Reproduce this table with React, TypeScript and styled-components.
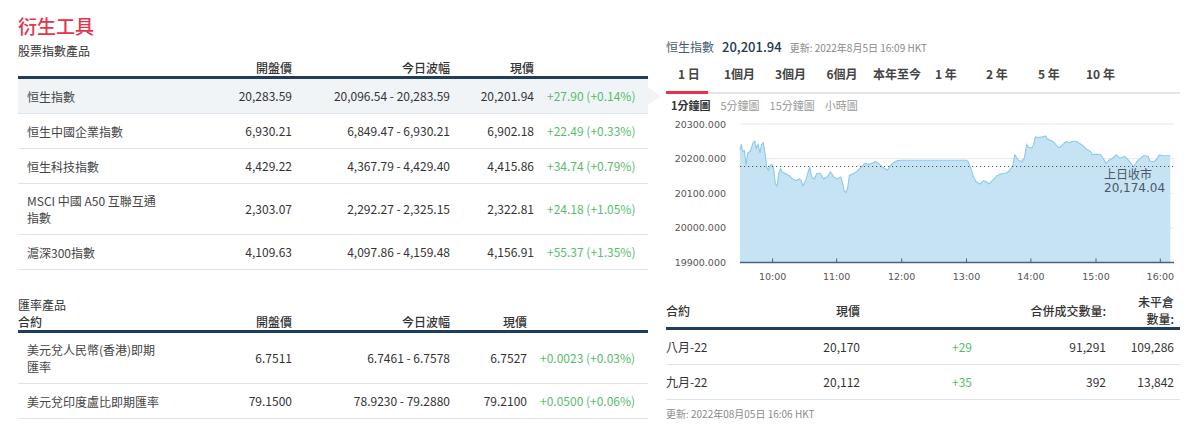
import styled, { createGlobalStyle } from 'styled-components'

const GlobalStyle = createGlobalStyle`
  body {
    margin: 0;
    background: #fff;
    font-family: 'Noto Sans CJK TC', 'Noto Sans', sans-serif;
    color: #333;
  }
`

const colors = {
  red: '#e5334d',
  navy: '#1f3d5c',
  line: '#dde4ec',
  green: '#56bd6c',
  highlight: '#f1f4f7',
  text: '#333',
  muted: '#8a8a8a',
}

const Page = styled.div`
  display: flex;
  gap: 18px;
  width: 1200px;
  height: 424px;
  box-sizing: border-box;
  padding: 14px 0 0 18px;
  overflow: hidden;
`
const Left = styled.section`
  width: 630px;
  flex: none;
`
const Right = styled.section`
  width: 514px;
  flex: none;
  padding-top: 24px;
`
const Title = styled.h1`
  margin: 0;
  font-size: 19px;
  line-height: 24px;
  font-weight: 500;
  color: ${colors.red};
`
const SubTitle = styled.h2<{ $gap: number }>`
  margin: ${(p) => p.$gap}px 0 0;
  font-size: 12px;
  line-height: 16px;
  font-weight: 400;
  color: ${colors.text};
`
const Table = styled.table<{ $w: number }>`
  width: ${(p) => p.$w}px;
  border-collapse: collapse;
  table-layout: fixed;
  font-size: 12px;
`
const Col = styled.col<{ $w: number }>`
  width: ${(p) => p.$w}px;
`
const Th = styled.th<{ $align?: 'left' | 'right'; $padR?: number; $lh?: number }>`
  text-align: ${(p) => p.$align || 'right'};
  font-weight: 500;
  line-height: ${(p) => p.$lh || 16}px;
  padding: 1px ${(p) => p.$padR || 0}px 0 0;
  border-bottom: 3px solid ${colors.navy};
  color: ${colors.text};
  vertical-align: middle;
  white-space: nowrap;
`
const Tr = styled.tr<{ $active?: boolean }>`
  background: ${(p) => (p.$active ? colors.highlight : 'transparent')};
`
const Td = styled.td<{ $align?: 'left' | 'right'; $padL?: number; $padR?: number; $up?: boolean }>`
  text-align: ${(p) => p.$align || 'right'};
  padding: 8px ${(p) => p.$padR || 0}px 8px ${(p) => p.$padL || 0}px;
  line-height: 18px;
  border-bottom: 1px solid ${colors.line};
  color: ${(p) => (p.$up ? colors.green : colors.text)};
  white-space: nowrap;
`
const NameTd = styled.td`
  padding: 8px 30px 8px 9px;
  line-height: 17px;
  border-bottom: 1px solid ${colors.line};
  color: #444;
  text-align: left;
`
const ChangeTd = styled(Td)<{ $arrow?: boolean }>`
  position: relative;
  &::after {
    content: '';
    display: ${(p) => (p.$arrow ? 'block' : 'none')};
    position: absolute;
    right: -13px;
    top: 50%;
    transform: translateY(-50%);
    border-left: 13px solid ${colors.highlight};
    border-top: 9px solid transparent;
    border-bottom: 9px solid transparent;
  }
`

/* right panel */
const InfoLine = styled.div`
  display: flex;
  align-items: baseline;
  gap: 8px;
  line-height: 18px;
`
const InfoName = styled.span`
  font-size: 12px;
  color: #4a5a6b;
`
const InfoPrice = styled.span`
  font-size: 13px;
  font-weight: 500;
  color: #23384d;
`
const Stamp = styled.span`
  font-size: 10px;
  color: ${colors.muted};
`
const Tabs = styled.div`
  display: flex;
  padding-top: 9px;
  border-bottom: 2px solid #e4e4e4;
`
const Tab = styled.div<{ $w?: number; $active?: boolean }>`
  position: relative;
  box-sizing: border-box;
  flex: ${(p) => (p.$w ? `0 0 ${p.$w}px` : '1')};
  padding: 0 0 10px 12px;
  font-size: 12px;
  line-height: 16px;
  font-weight: 700;
  color: #444;
  white-space: nowrap;
  &::after {
    content: '';
    display: ${(p) => (p.$active ? 'block' : 'none')};
    position: absolute;
    left: 0;
    bottom: -2px;
    width: 42px;
    height: 3px;
    background: ${colors.red};
  }
`
const SubTabs = styled.div`
  display: flex;
  gap: 10px;
  padding-left: 5px;
  margin-top: 4px;
  font-size: 11px;
  line-height: 14px;
`
const SubTab = styled.span<{ $active?: boolean }>`
  color: ${(p) => (p.$active ? '#333' : '#999')};
  font-weight: ${(p) => (p.$active ? 700 : 400)};
`
const ChartSvg = styled.svg`
  display: block;
  margin-top: 2px;
  font-family: 'DejaVu Sans', 'Noto Sans CJK TC', sans-serif;
`
const FutTable = styled(Table)`
  margin-top: 6px;
`
const Footnote = styled.div`
  margin-top: 7px;
  font-size: 10px;
  line-height: 14px;
  color: ${colors.muted};
`

const indexRows = [
  ['恒生指數', '20,283.59', '20,096.54 - 20,283.59', '20,201.94', '+27.90 (+0.14%)'],
  ['恒生中國企業指數', '6,930.21', '6,849.47 - 6,930.21', '6,902.18', '+22.49 (+0.33%)'],
  ['恒生科技指數', '4,429.22', '4,367.79 - 4,429.40', '4,415.86', '+34.74 (+0.79%)'],
  ['MSCI 中國 A50 互聯互通指數', '2,303.07', '2,292.27 - 2,325.15', '2,322.81', '+24.18 (+1.05%)'],
  ['滬深300指數', '4,109.63', '4,097.86 - 4,159.48', '4,156.91', '+55.37 (+1.35%)'],
]

const fxRows = [
  ['美元兌人民幣(香港)即期匯率', '6.7511', '6.7461 - 6.7578', '6.7527', '+0.0023 (+0.03%)'],
  ['美元兌印度盧比即期匯率', '79.1500', '78.9230 - 79.2880', '79.2100', '+0.0500 (+0.06%)'],
]

const futRows = [
  ['八月-22', '20,170', '+29', '91,291', '109,286'],
  ['九月-22', '20,112', '+35', '392', '13,842'],
]

const tabs: [string, number?][] = [
  ['1 日', 46],
  ['1個月', 51],
  ['3個月', 51.5],
  ['6個月', 46.5],
  ['本年至今', 62],
  ['1 年', 51],
  ['2 年', 52],
  ['5 年', 48],
  ['10 年'],
]

// intraday trace, sampled off the chart (raw units, scaled below)
const RAW: [number, number][] = [
  [232, 115], [236, 100], [240, 120], [245, 118], [250, 160], [255, 125], [262, 120], [270, 95],
  [275, 90], [280, 110], [285, 100], [290, 125], [295, 100], [300, 95], [305, 125], [310, 165],
  [315, 175], [320, 160], [325, 158], [330, 170], [335, 215], [340, 220], [345, 185], [350, 170],
  [355, 180], [365, 185], [375, 190], [385, 200], [395, 205], [405, 200], [410, 205], [415, 220],
  [425, 200], [430, 180], [435, 165], [440, 195], [448, 200], [455, 185], [465, 183], [475, 200],
  [485, 195], [495, 180], [505, 195], [515, 200], [525, 195], [530, 210], [535, 235], [540, 240],
  [545, 225], [550, 190], [560, 185], [570, 180], [575, 175], [585, 165], [595, 155], [605, 158],
  [615, 155], [625, 150], [635, 155], [645, 165], [660, 175], [670, 160], [680, 152], [690, 147],
  [700, 146], [890, 146], [895, 150], [905, 175], [910, 195], [920, 210], [930, 215], [940, 205],
  [950, 210], [955, 215], [965, 205], [970, 200], [980, 190], [990, 185], [1000, 185], [1010, 180],
  [1015, 175], [1020, 170], [1025, 160], [1030, 130], [1040, 145], [1050, 150], [1058, 140],
  [1065, 100], [1070, 108], [1080, 110], [1085, 100], [1090, 78], [1100, 80], [1110, 78],
  [1120, 75], [1125, 85], [1135, 88], [1145, 95], [1155, 107], [1160, 110], [1170, 100],
  [1180, 92], [1190, 95], [1200, 90], [1210, 92], [1220, 98], [1230, 105], [1240, 115],
  [1250, 120], [1255, 130], [1265, 128], [1280, 130], [1290, 145], [1295, 155], [1305, 145],
  [1315, 140], [1325, 130], [1335, 140], [1350, 135], [1360, 145], [1375, 165], [1385, 150],
  [1395, 140], [1405, 132], [1418, 135], [1422, 148], [1435, 150], [1445, 140], [1450, 130],
  [1460, 132], [1482, 133],
]

const SX = 2.904
const PLOT_L = 74
const PLOT_R = 508
const AXIS_Y = 148.5
const yTicks = ['20300.000', '20200.000', '20100.000', '20000.000', '19900.000']
const xTicks: [string, number][] = [
  ['10:00', 106.6], ['11:00', 170.7], ['12:00', 235.7], ['13:00', 300.5],
  ['14:00', 364.9], ['15:00', 430], ['16:00', 494.3],
]

function Chart() {
  const pts = RAW.map(([x, y]) => [x / SX - 6, y / SX - 4])
  const line = pts.map(([x, y], i) => `${i ? 'L' : 'M'}${x.toFixed(1)},${y.toFixed(1)}`).join('')
  const first = pts[0][0].toFixed(1)
  const last = pts[pts.length - 1][0].toFixed(1)
  const area = `${line}L${last},${AXIS_Y}L${first},${AXIS_Y}Z`
  const step = (AXIS_Y - 10) / 4

  return (
    <ChartSvg width={514} height={172} viewBox="0 0 514 172">
      {yTicks.map((t, i) => {
        const y = 10 + step * i
        return (
          <g key={t}>
            {i < 4 && <line x1={PLOT_L} x2={PLOT_R} y1={y} y2={y} stroke="#e8e8e8" />}
            <text x={60} y={y + 3.5} fontSize={9.5} fill="#555" textAnchor="end">
              {t}
            </text>
          </g>
        )
      })}
      <path d={area} fill="#c6e3f4" />
      <path d={line} fill="none" stroke="#8ccaea" strokeWidth={1.1} />
      <line x1={PLOT_L} x2={PLOT_R} y1={52.5} y2={52.5} stroke="#555" strokeDasharray="1.2 2.8" />
      <line x1={PLOT_L} x2={PLOT_R} y1={AXIS_Y} y2={AXIS_Y} stroke="#48617c" strokeWidth={1.5} />
      {xTicks.map(([t, x]) => (
        <g key={t}>
          <line x1={x} x2={x} y1={AXIS_Y - 4} y2={AXIS_Y} stroke="#48617c" />
          <text x={x} y={166} fontSize={9.5} fill="#555" textAnchor="middle">
            {t}
          </text>
        </g>
      ))}
      <text x={438} y={65} fontSize={12} fill="#4b5666">
        上日收市
      </text>
      <text x={438} y={77.5} fontSize={12} fill="#4b5666">
        20,174.04
      </text>
    </ChartSvg>
  )
}

function ProductTable({
  rows,
  cols,
  firstHead,
  active,
}: {
  rows: string[][]
  cols: number[]
  firstHead: string
  active?: number
}) {
  return (
    <Table $w={630}>
      <colgroup>
        {cols.map((w, i) => (
          <Col key={i} $w={w} />
        ))}
      </colgroup>
      <thead>
        <tr>
          <Th $align="left">{firstHead}</Th>
          <Th>開盤價</Th>
          <Th>今日波幅</Th>
          <Th>現價</Th>
          <Th />
        </tr>
      </thead>
      <tbody>
        {rows.map((r, i) => (
          <Tr key={r[0]} $active={i === active}>
            <NameTd>{r[0]}</NameTd>
            <Td>{r[1]}</Td>
            <Td>{r[2]}</Td>
            <Td>{r[3]}</Td>
            <ChangeTd $align="left" $padL={13} $up $arrow={i === active}>
              {r[4]}
            </ChangeTd>
          </Tr>
        ))}
      </tbody>
    </Table>
  )
}

export default function App() {
  return (
    <>
      <GlobalStyle />
      <Page>
        <Left>
          <Title>衍生工具</Title>
          <SubTitle $gap={5}>股票指數產品</SubTitle>
          <ProductTable rows={indexRows} cols={[178, 96, 158, 84, 114]} firstHead="" active={0} />
          <SubTitle $gap={27}>匯率產品</SubTitle>
          <ProductTable rows={fxRows} cols={[178, 96, 158, 77, 121]} firstHead="合約" />
        </Left>

        <Right>
          <InfoLine>
            <InfoName>恒生指數</InfoName>
            <InfoPrice>20,201.94</InfoPrice>
            <Stamp>更新: 2022年8月5日 16:09 HKT</Stamp>
          </InfoLine>
          <Tabs>
            {tabs.map(([t, w], i) => (
              <Tab key={t} $w={w} $active={i === 0}>
                {t}
              </Tab>
            ))}
          </Tabs>
          <SubTabs>
            <SubTab $active>1分鐘圖</SubTab>
            <SubTab>5分鐘圖</SubTab>
            <SubTab>15分鐘圖</SubTab>
            <SubTab>小時圖</SubTab>
          </SubTabs>
          <Chart />
          <FutTable $w={514}>
            <colgroup>
              <Col $w={94} />
              <Col $w={100} />
              <Col $w={112} />
              <Col $w={134} />
              <Col $w={74} />
            </colgroup>
            <thead>
              <tr>
                <Th $align="left" $lh={17}>合約</Th>
                <Th $lh={17}>現價</Th>
                <Th $lh={17} />
                <Th $lh={17}>合併成交數量:</Th>
                <Th $lh={17} $padR={6}>
                  未平倉
                  <br />
                  數量:
                </Th>
              </tr>
            </thead>
            <tbody>
              {futRows.map((r) => (
                <tr key={r[0]}>
                  <Td $align="left">{r[0]}</Td>
                  <Td>{r[1]}</Td>
                  <Td $up>{r[2]}</Td>
                  <Td>{r[3]}</Td>
                  <Td $padR={6}>{r[4]}</Td>
                </tr>
              ))}
            </tbody>
          </FutTable>
          <Footnote>更新: 2022年08月05日 16:06 HKT</Footnote>
        </Right>
      </Page>
    </>
  )
}
